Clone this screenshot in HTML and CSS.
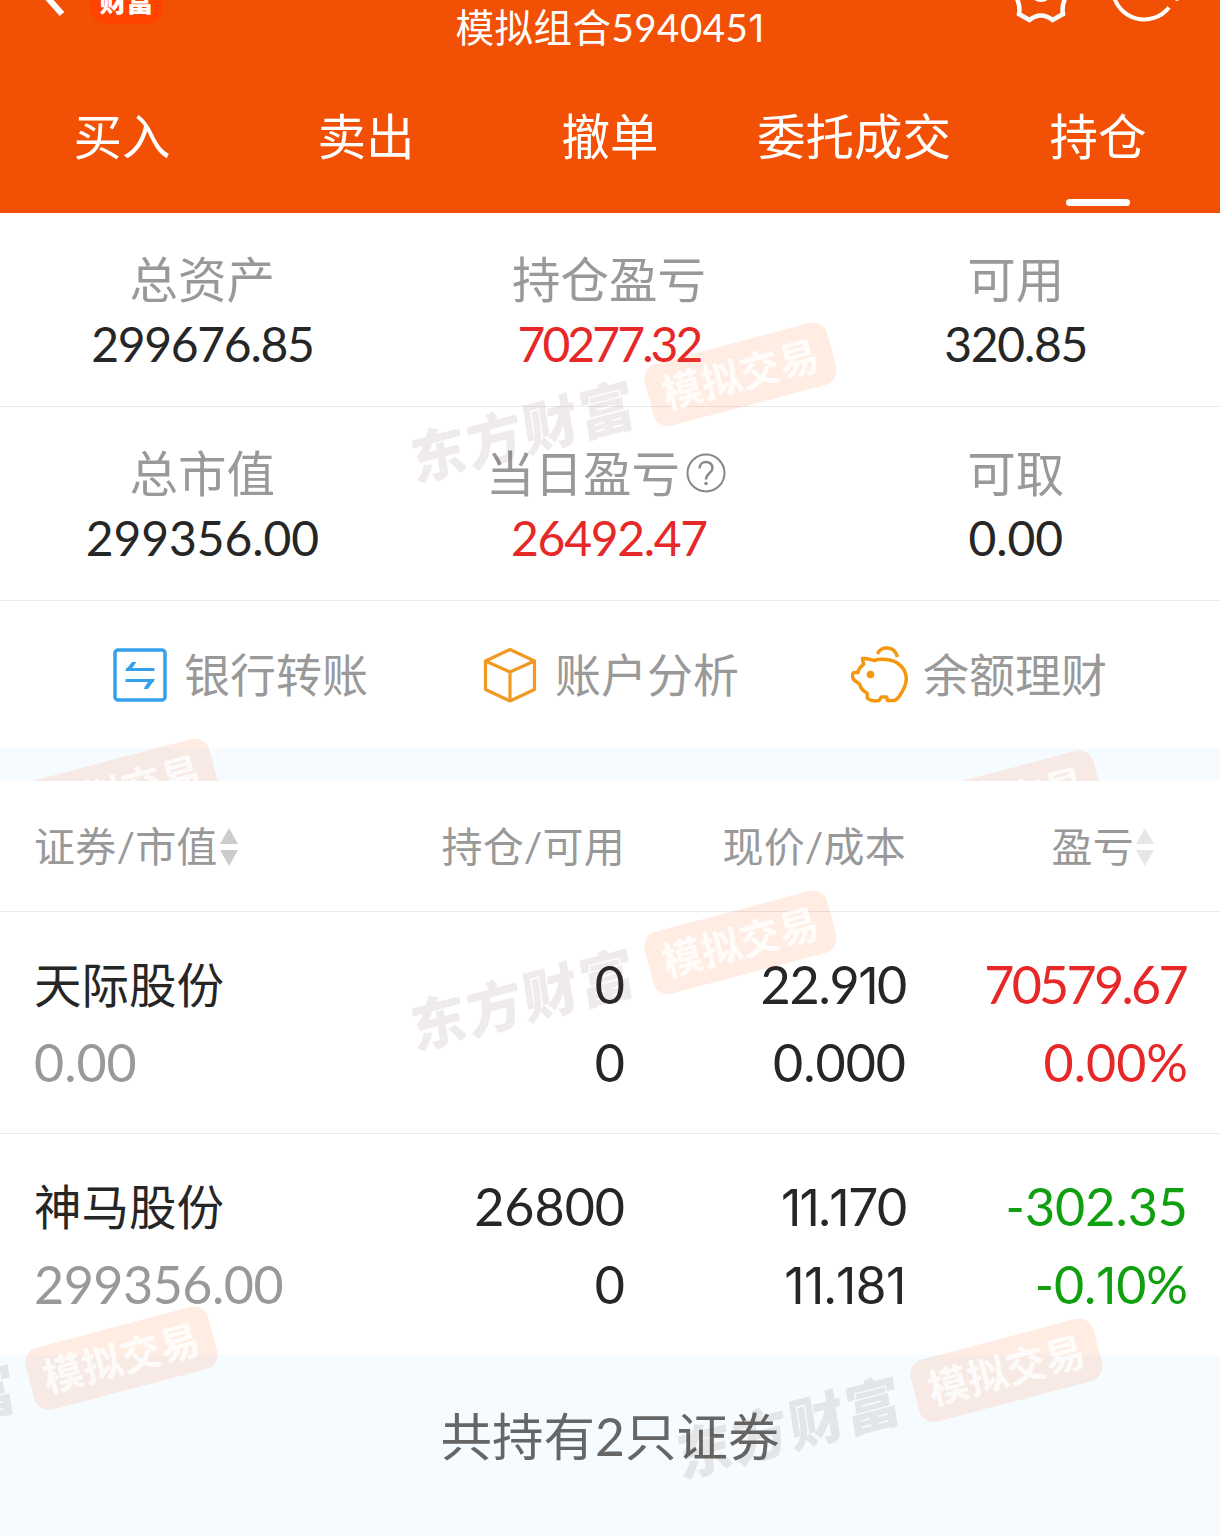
FILE: index.html
```html
<!DOCTYPE html>
<html lang="zh-CN">
<head>
<meta charset="utf-8">
<title>模拟组合</title>
<link rel="stylesheet" href="styles.css">
</head>
<body>
<div class="app">
  <header class="top">
    <div class="titlebar">
      <div class="title-left">
        <svg class="back" width="30" height="24" viewBox="0 0 30 24"><path d="M0-13 24 14" fill="none" stroke="#fff" stroke-width="6"/></svg>
        <span class="logo">财富</span>
      </div>
      <h1>模拟组合594045<span class="one-wide">1</span></h1>
      <svg class="tools" width="180" height="28" viewBox="1010 0 180 28" fill="none" stroke="#fff" stroke-width="4">
        <path d="M1014-7Q1021 4 1019 14L1029.500 20Q1041 11 1052.500 20L1063 14Q1061 4 1068-7" stroke-width="4.500"/>
        <circle cx="1041" cy="-10" r="10"/>
        <path d="M1113-8A31.500 31.500 0 0 0 1169 7.500"/>
        <circle cx="1177" cy="-1" r="2" fill="#fff" stroke="none"/>
      </svg>
    </div>
    <nav class="tabs">
      <a>买入</a><a>卖出</a><a>撤单</a><a>委托成交</a><a class="active">持仓</a>
    </nav>
  </header>

  <section class="stats">
    <div class="stat"><span class="label">总资产</span><span class="value">299676.85</span></div>
    <div class="stat"><span class="label">持仓盈亏</span><span class="value up sevens">70277.32</span></div>
    <div class="stat"><span class="label">可用</span><span class="value">320.85</span></div>
  </section>
  <section class="stats">
    <div class="stat"><span class="label">总市值</span><span class="value wide">299356.00</span></div>
    <div class="stat"><span class="label help">当日盈亏<svg width="42" height="42" viewBox="0 0 42 42" fill="none" stroke="#888" stroke-width="2"><circle cx="21" cy="21" r="18.500"/><path d="M14.500 16.500C14.500 8 27.500 8 27.500 16C27.500 21 21 21.500 21 27.500" stroke-width="2.500"/><circle cx="21" cy="31.500" r="1.700" fill="#888" stroke="none"/></svg></span><span class="value up">26492.47</span></div>
    <div class="stat"><span class="label">可取</span><span class="value wide">0.00</span></div>
  </section>

  <section class="actions">
    <a class="act-bank"><svg width="54" height="54" viewBox="0 0 54 54" fill="none" stroke="#35a1ec" stroke-width="3.500"><rect x="2" y="2" width="50" height="50" rx="3"/><path d="M13 21.500H41.500M12.500 32.500H41" stroke-width="3"/><path d="M12 23 19 14H23.500L17 23ZM42 31 35 41H30.500L37 31Z" fill="#35a1ec" stroke="none"/></svg>银行转账</a>
    <a class="act-cube"><svg width="54" height="56" viewBox="0 0 54 56" fill="none" stroke="#f09a24" stroke-width="3.200" stroke-linejoin="round"><path d="M27 2.500 51.500 14V42.500L27 54 2.500 42.500V14ZM2.500 14 27 25 51.500 14M27 25V54"/></svg>账户分析</a>
    <a class="act-pig"><svg width="57" height="57" viewBox="0 0 57 57" fill="none" stroke="#f5980f" stroke-width="3.500" stroke-linejoin="round"><path d="M11.500 12.500C17 12 20 13.500 23 14.500C29 12.500 41 13 47 17.500C56 24 57 34 53 42C50 48 47 54 43 54.500H36.500L35.500 51H30.500L28 54.500C23 55.500 19 54.500 16.500 52.500L16 47C12 45 9.500 42 8.500 38L3 34C1 31 1 28 3 26.500L7 26.500C7.500 23 9 21 12.500 18.500Z"/><path d="M26.500 8C30-1 44 0 46.500 11"/><circle cx="19.500" cy="28.500" r="3.800" fill="#f5980f" stroke="none"/></svg>余额理财</a>
  </section>

  <div class="band"></div>

  <section class="table">
    <div class="thead">
      <span>证券/市值<svg class="sort" width="20" height="38" viewBox="0 0 20 38" fill="#ccc"><path d="M10 0 19 16H1ZM1 22H19L10 38Z"/></svg></span>
      <span>持仓/可用</span>
      <span>现价/成本</span>
      <span class="pl">盈亏<svg class="sort" width="20" height="38" viewBox="0 0 20 38" fill="#e9e6e9"><path d="M10 0 19 16H1ZM1 22H19L10 38Z"/></svg></span>
    </div>
    <div class="trow">
      <div><b>天际股份</b><em>0.00</em></div>
      <div><span>0</span><span>0</span></div>
      <div><span class="k1">22.9<i class="one">1</i>0</span><span>0.000</span></div>
      <div class="up"><span class="k2">70579.67</span><span>0.00%</span></div>
    </div>
    <div class="trow">
      <div><b>神马股份</b><em class="mv">299356.00</em></div>
      <div><span>26800</span><span>0</span></div>
      <div><span class="k1"><i class="one">1</i><i class="one">1</i>.<i class="one">1</i>70</span><span><i class="one">1</i><i class="one">1</i>.<i class="one">1</i>8<i class="one">1</i></span></div>
      <div class="down"><span>-302.35</span><span>-0.<i class="one">1</i>0%</span></div>
    </div>
  </section>

  <footer class="summary">共持有2只证券</footer>

  <div class="wm w1"><span>东方财富</span><i>模拟交易</i></div>
  <div class="wm w2"><span>东方财富</span><i>模拟交易</i></div>
  <div class="wm w3 gray"><span>东方财富</span><i>模拟交易</i></div>
  <div class="wm w4 gray"><span>东方财富</span><i>模拟交易</i></div>
  <div class="wm-clip">
    <div class="wm w5"><i>模拟交易</i></div>
    <div class="wm w6"><i>模拟交易</i></div>
  </div>
</div>
</body>
</html>
```
FILE: styles.css
```css
* { box-sizing: border-box; }
body { margin: 0; background: #f6fbff; font-family: Lato, "Noto Sans CJK SC", sans-serif; color: #262626; }
.app { position: relative; width: 1220px; height: 1536px; overflow: hidden; display: flex; flex-direction: column; }
.up { color: #e62828; }
.down { color: #0f9f0f; }

.top { height: 213px; background: #f25105; color: #fff; }
.titlebar { height: 60px; display: grid; grid-template-columns: 1fr auto 1fr; align-items: start; }
.title-left { display: flex; padding-left: 38px; }
.back { margin-right: 22px; }
.logo { width: 73px; height: 24px; border-radius: 0 0 16px 16px; background: #ff4300; font-size: 27px; font-weight: 900; line-height: 4px; text-align: center; }
h1 { margin: 0; font-size: 38.500px; font-weight: 400; line-height: 55px; letter-spacing: .5px; }
.tools { justify-self: end; margin-right: 30px; }
.tabs { display: grid; grid-template-columns: repeat(5, 1fr); height: 153px; font-size: 48.500px; line-height: 153px; text-align: center; }
.tabs a { display: flex; flex-direction: column; align-items: center; height: 153px; }
.tabs .active::after { content: ""; width: 64px; height: 7px; margin-top: -14px; border-radius: 4px; background: #fff; flex: none; }

/* narrow, footless numeral one */
.one, .one-wide { font-family: Inter, sans-serif; font-style: normal; line-height: 0; }
.one { font-size: 50px; margin: 0 -.3px; }

.stats { display: grid; grid-template-columns: repeat(3, 1fr); height: 194px; padding-top: 34px; background: #fff; border-bottom: 1px solid #ebebeb; }
.stat { display: flex; flex-direction: column; align-items: center; line-height: 65px; margin-left: -2px; }
.label { font-size: 48.500px; color: #999; }
.help { display: flex; align-items: center; }
.help svg { margin: -2px 5px 0 5px; }
.value { font-size: 48px; letter-spacing: -1.300px; margin-top: -1px; }
.wide { letter-spacing: -.1px; }
.sevens { letter-spacing: -2.900px; }

.actions { display: flex; height: 147px; background: #fff; color: #999; font-size: 46px; line-height: 147px; padding-left: 113px; }
.actions a { display: flex; align-items: center; gap: 18px; }
.actions .act-bank { width: 370px; gap: 17px; }
.act-cube { width: 368px; }
.actions .act-pig { gap: 15px; }
.band { height: 33px; }

.table { background: #fff; }
.thead, .trow { display: grid; grid-template-columns: 311px 280px 281px 282px; padding-left: 34px; }
.thead { height: 131px; line-height: 131px; border-bottom: 1px solid #ebebeb; font-size: 41px; letter-spacing: .2px; color: #999; text-align: right; }
.thead span { display: flex; align-items: center; justify-content: flex-end; }
.thead span:first-child { justify-content: flex-start; }
.thead .pl { padding-right: 33px; }
.sort { margin-left: 1px; }
.trow { height: 222px; padding-top: 34px; border-bottom: 1px solid #ebebeb; line-height: 77.500px; font-size: 52px; }
.trow:last-child { border: 0; height: 221px; }
.trow div { display: flex; flex-direction: column; align-items: flex-end; }
.trow div:first-child { align-items: flex-start; }
.trow b { font-size: 47.500px; font-weight: 400; }
.trow em { font-style: normal; color: #999; }
.mv { letter-spacing: -.5px; }
.k1 { letter-spacing: -1.200px; }
.k2 { letter-spacing: -2.700px; margin-right: 2px; }

.summary { font-size: 51.500px; line-height: 163px; text-align: center; color: #666; }

/* tilted brand stamps over the page */
.wm { position: absolute; display: flex; align-items: center; justify-content: flex-end; gap: 16px; width: 437px; height: 64px; transform: rotate(-14.800deg); white-space: nowrap; pointer-events: none; }
.wm span { width: 232px; font-size: 56px; letter-spacing: 2px; font-weight: 900; line-height: 60px; padding: 0 0 0 2px; color: rgba(85, 45, 75, .1); transform: skewX(-6deg); }
.wm.gray span { color: rgba(90, 70, 60, .12); }
.wm i { width: 189px; height: 64px; border-radius: 15px; background: rgba(255, 100, 20, .115); color: rgba(255, 255, 255, .85); font-style: normal; font-weight: 700; font-size: 40px; line-height: 64px; text-align: center; }
.w1 { left: 402px; top: 374px; }
.w2 { left: 402px; top: 942px; }
.w3 { left: 668px; top: 1370px; }
.w4 { left: -217px; top: 1358px; }
.wm-clip { position: absolute; left: 0; top: 700px; width: 1220px; height: 81px; overflow: hidden; }
.w5 { left: -216px; top: 90px; }
.w6 { left: 668px; top: 102px; }
```
